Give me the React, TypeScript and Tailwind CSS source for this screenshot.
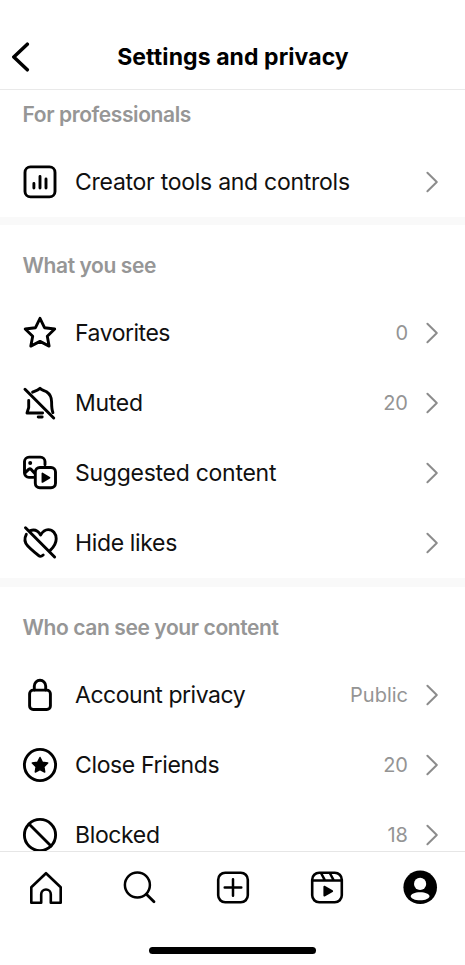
import type { ReactNode } from "react";

function Icon({ children }: { children: ReactNode }) {
  return (
    <svg
      width="36"
      height="36"
      viewBox="0 0 36 36"
      fill="none"
      stroke="#000"
      strokeWidth="2.9"
      strokeLinecap="round"
      strokeLinejoin="round"
      className="shrink-0 overflow-visible"
    >
      {children}
    </svg>
  );
}

const creatorIcon = (
  <Icon>
    <rect x="3" y="2.9" width="30" height="30" rx="5.5" />
    <path d="M11.9 19.5V24M18 12.4V24M24 15V24" />
  </Icon>
);

const starIcon = (
  <Icon>
    <path d="M18 3.3L22.5 12.7L32.7 14L25.3 21.2L27.1 31.1L18 26.4L8.8 31.1L10.7 21.2L3.2 14L13.5 12.7Z" />
  </Icon>
);

const mutedIcon = (
  <Icon>
    <path d="M3 4.3L31.7 33" strokeWidth="3" />
    <path d="M10.6 7.2C13 6.2 16 5.2 18 3.4C19.8 5.2 22.3 5.5 24.5 6.8C28.2 9.2 29.6 12.6 29.6 17C29.6 21 29.6 24.4 30.9 27.6" />
    <path d="M6.7 15.5V22.5L5 28H20.6" />
    <path d="M16.2 32H20.2" />
  </Icon>
);

const suggestedIcon = (
  <Icon>
    <path d="M11.2 22.4H7A4.6 4.6 0 0 1 2.5 17.8V6.6A4.6 4.6 0 0 1 7.1 2.1H18.4A4.6 4.6 0 0 1 23 6.6V9.8" />
    <path d="M3 17.8L6.9 14.2Q8 13.4 9 14.2L12.2 17.8" strokeWidth="3" />
    <circle cx="8.2" cy="7.9" r="2" fill="#000" stroke="none" />
    <rect x="13.3" y="12.5" width="20.2" height="20.2" rx="4.5" />
    <path d="M20.4 18.4V27L27.5 22.7Z" fill="#000" strokeWidth="1.7" />
  </Icon>
);

const hideLikesIcon = (
  <Icon>
    <path d="M3.5 2.8L32.6 32" strokeWidth="3" />
    <path d="M8.2 5.6C13 3.8 16.4 6.2 18.6 9.9C20.5 6.7 23 4.6 26.2 4.6C30.8 4.6 34.2 8.6 34.2 13.8C34.2 18.8 32 21.9 28.2 25.4" />
    <path d="M4.3 9.3C2.2 13.3 2.7 17.7 5.8 21C9 24.5 13.2 27.5 16.4 30.4C18.2 32 19.1 31.9 21.2 30" />
  </Icon>
);

const lockIcon = (
  <Icon>
    <rect x="7.6" y="13.1" width="20.8" height="19.4" rx="3.6" />
    <path d="M12.3 13V9A5.7 5.7 0 0 1 23.7 9V13" />
  </Icon>
);

const closeFriendsIcon = (
  <Icon>
    <circle cx="18" cy="18" r="15.6" />
    <path
      d="M18 10.5L20.4 15.3L25.7 16L21.9 19.8L22.7 25L18 22.6L13.3 25L14.1 19.8L10.3 16L15.6 15.3Z"
      fill="#000"
      strokeWidth="1.5"
    />
  </Icon>
);

const blockedIcon = (
  <Icon>
    <circle cx="18" cy="18" r="15.6" />
    <path d="M7 7L29 29" />
  </Icon>
);

function Chevron() {
  return (
    <svg width="14" height="22" viewBox="0 0 14 22" fill="none" className="shrink-0">
      <path d="M2.4 1.8L11.8 11L2.4 20.2" stroke="#8c8c8c" strokeWidth="2" strokeLinecap="round" strokeLinejoin="round" />
    </svg>
  );
}

type RowProps = { icon: ReactNode; label: string; value?: string; tracking?: string };

function Row({ icon, label, value, tracking = "tracking-[-0.27px]" }: RowProps) {
  return (
    <div className="flex h-[70.2px] items-center pr-[26px] pl-[22px]">
      {icon}
      <span className={`ml-[17px] flex-1 text-[23px] leading-7 whitespace-nowrap text-[#101010] ${tracking}`}>
        {label}
      </span>
      {value && <span className="mr-[17px] text-[20px] leading-7 text-[#949494]">{value}</span>}
      <Chevron />
    </div>
  );
}

function Section({ title, children }: { title: string; children: ReactNode }) {
  return (
    <section>
      <h2 className="h-[72.5px] pt-[27px] pl-[22.5px] text-[21px] leading-7 font-semibold tracking-[-0.4px] whitespace-nowrap text-[#969696]">
        {title}
      </h2>
      {children}
    </section>
  );
}

function Divider() {
  return <div className="h-[8.5px] bg-[#f9f9f9]" />;
}

export default function App() {
  return (
    <div className="flex h-[965px] w-[465px] flex-col overflow-hidden bg-white font-['Inter',sans-serif] text-black">
      <header className="grid h-[90px] shrink-0 grid-cols-[60px_1fr_60px] items-center border-b border-[#e9e9e9] pt-6">
        <svg width="20" height="30" viewBox="0 0 20 30" fill="none" className="ml-[11px]">
          <path d="M16.3 2.2L2.8 15L16.3 27.8" stroke="#000" strokeWidth="3.5" strokeLinecap="round" strokeLinejoin="round" />
        </svg>
        <h1 className="pl-px text-center text-[23px] leading-7 font-bold tracking-[0.08px] whitespace-nowrap">
          Settings and privacy
        </h1>
      </header>

      <main className="h-[761px] shrink-0 overflow-hidden">
        <div className="-mt-4">
          <Section title="For professionals">
            <Row icon={creatorIcon} label="Creator tools and controls" />
          </Section>
          <Divider />
          <Section title="What you see">
            <Row icon={starIcon} label="Favorites" value="0" tracking="tracking-[-0.48px]" />
            <Row icon={mutedIcon} label="Muted" value="20" />
            <Row icon={suggestedIcon} label="Suggested content" />
            <Row icon={hideLikesIcon} label="Hide likes" tracking="tracking-[-0.35px]" />
          </Section>
          <Divider />
          <Section title="Who can see your content">
            <Row icon={lockIcon} label="Account privacy" value="Public" tracking="tracking-[-0.46px]" />
            <Row icon={closeFriendsIcon} label="Close Friends" value="20" tracking="tracking-[-0.36px]" />
            <Row icon={blockedIcon} label="Blocked" value="18" tracking="tracking-[-0.36px]" />
          </Section>
        </div>
      </main>

      <nav className="flex flex-1 flex-col items-center border-t border-[#e6e6e6] bg-white">
        <div className="flex w-full justify-between pt-[17px] pr-[27px] pl-[28px]">
          <Icon>
            <path
              d="M18 4.2L32.7 18.2V33.7H22.8V25.3A4.8 4.8 0 0 0 13.2 25.3V33.7H3.3V18.2Z"
              strokeWidth="2.6"
            />
          </Icon>
          <Icon>
            <circle cx="15.4" cy="16" r="12.5" strokeWidth="2.5" />
            <path d="M24.4 25.2L32 32.8" strokeWidth="2.8" />
          </Icon>
          <Icon>
            <rect x="3.2" y="3.7" width="29.6" height="29.6" rx="7" strokeWidth="2.6" />
            <path d="M18 10.2V26.8M9.7 18.5H26.3" strokeWidth="2.5" />
          </Icon>
          <Icon>
            <rect x="3.2" y="3.7" width="29.6" height="29.6" rx="7" strokeWidth="2.6" />
            <path d="M3.5 11.6H32.5M12 4L15.8 11.2M20.8 4L24.6 11.2" strokeWidth="2.5" strokeLinecap="butt" />
            <path d="M15.3 17.6V26.6L23.2 22.1Z" fill="#000" strokeWidth="1.8" />
          </Icon>
          <Icon>
            <circle cx="18.2" cy="18.3" r="16.8" fill="#000" stroke="none" />
            <circle cx="18.1" cy="14.9" r="6.1" fill="#fff" stroke="none" />
            <path
              d="M18.1 23.3C23.4 23.3 27.5 25.1 27.5 27.2C27.5 29.4 23.3 31.3 18.1 31.3C12.9 31.3 8.7 29.4 8.7 27.2C8.7 25.1 12.8 23.3 18.1 23.3Z"
              fill="#fff"
              stroke="none"
            />
          </Icon>
        </div>
        <div className="mt-[42px] h-[7px] w-[167px] rounded-full bg-black" />
      </nav>
    </div>
  );
}
